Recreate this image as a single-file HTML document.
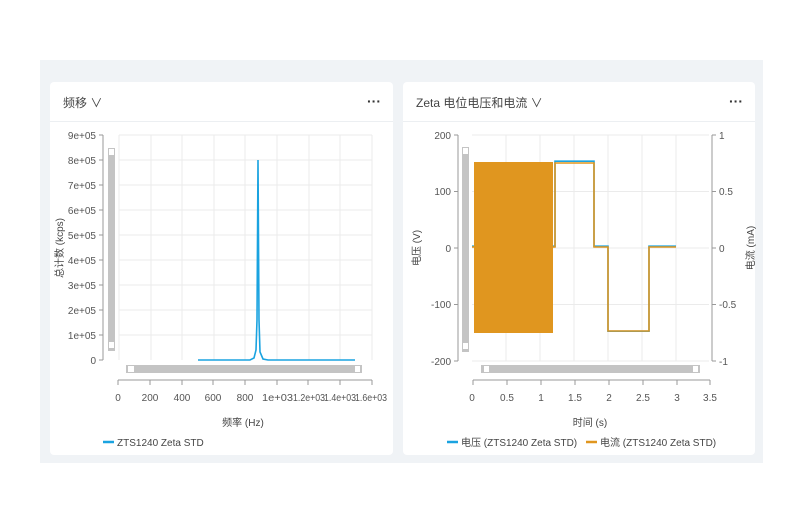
<!DOCTYPE html>
<html><head><meta charset="utf-8"><style>
body{margin:0;width:800px;height:523px;background:#fff;font-family:"Liberation Sans","Noto Sans CJK SC",sans-serif;position:relative;overflow:hidden}
.bg{position:absolute;left:40px;top:60px;width:723px;height:403px;background:#f0f3f6}
.topstrip{position:absolute;left:50px;top:52px;width:705px;height:7px;background:#fff}
.card{position:absolute;top:82px;height:373px;background:#fff;border-radius:4px}
.hd{position:absolute;left:0;right:0;top:0;height:39px;border-bottom:1px solid #eceff2}
.t{position:absolute;left:13px;top:12px;font-size:12px;color:#444}
.dots{position:absolute;right:12px;top:11px;font-size:14px;color:#333;font-weight:bold}
svg text{font-family:"Liberation Sans","Noto Sans CJK SC",sans-serif;fill:#555;font-size:10px}
</style></head><body>
<div class="topstrip"></div>
<div class="bg"></div>
<div class="card" style="left:50px;width:343px"><div class="hd"><div class="t">频移 ∨</div><div class="dots">···</div></div></div>
<div class="card" style="left:403px;width:352px"><div class="hd"><div class="t">Zeta 电位电压和电流 ∨</div><div class="dots">···</div></div></div>
<svg width="800" height="523" style="position:absolute;left:0;top:0">
<g stroke="#ebebeb" stroke-width="1">
<line x1="119" y1="135" x2="372" y2="135"/><line x1="119" y1="160" x2="372" y2="160"/><line x1="119" y1="185" x2="372" y2="185"/><line x1="119" y1="210" x2="372" y2="210"/><line x1="119" y1="235" x2="372" y2="235"/><line x1="119" y1="260" x2="372" y2="260"/><line x1="119" y1="285" x2="372" y2="285"/><line x1="119" y1="310" x2="372" y2="310"/><line x1="119" y1="335" x2="372" y2="335"/>
<line x1="119" y1="135" x2="119" y2="360"/><line x1="151" y1="135" x2="151" y2="360"/><line x1="182" y1="135" x2="182" y2="360"/><line x1="214" y1="135" x2="214" y2="360"/><line x1="245" y1="135" x2="245" y2="360"/><line x1="277" y1="135" x2="277" y2="360"/><line x1="309" y1="135" x2="309" y2="360"/><line x1="340" y1="135" x2="340" y2="360"/><line x1="372" y1="135" x2="372" y2="360"/>
</g>
<g stroke="#999"><line x1="103" y1="135" x2="103" y2="360"/>
<line x1="99" y1="135" x2="103" y2="135"/><line x1="99" y1="160" x2="103" y2="160"/><line x1="99" y1="185" x2="103" y2="185"/><line x1="99" y1="210" x2="103" y2="210"/><line x1="99" y1="235" x2="103" y2="235"/><line x1="99" y1="260" x2="103" y2="260"/><line x1="99" y1="285" x2="103" y2="285"/><line x1="99" y1="310" x2="103" y2="310"/><line x1="99" y1="335" x2="103" y2="335"/><line x1="99" y1="360" x2="103" y2="360"/>
<line x1="118" y1="380" x2="372" y2="380"/>
<line x1="118" y1="380" x2="118" y2="385"/><line x1="150" y1="380" x2="150" y2="385"/><line x1="182" y1="380" x2="182" y2="385"/><line x1="213" y1="380" x2="213" y2="385"/><line x1="245" y1="380" x2="245" y2="385"/><line x1="277" y1="380" x2="277" y2="385"/><line x1="308" y1="380" x2="308" y2="385"/><line x1="340" y1="380" x2="340" y2="385"/><line x1="372" y1="380" x2="372" y2="385"/>
</g>
<g text-anchor="end"><text x="96" y="139">9e+05</text><text x="96" y="164">8e+05</text><text x="96" y="189">7e+05</text><text x="96" y="214">6e+05</text><text x="96" y="239">5e+05</text><text x="96" y="264">4e+05</text><text x="96" y="289">3e+05</text><text x="96" y="314">2e+05</text><text x="96" y="339">1e+05</text><text x="96" y="364">0</text></g>
<g font-size="10"><text x="118" y="401" text-anchor="middle">0</text><text x="150" y="401" text-anchor="middle">200</text><text x="182" y="401" text-anchor="middle">400</text><text x="213" y="401" text-anchor="middle">600</text><text x="245" y="401" text-anchor="middle">800</text>
<text x="262" y="401" textLength="31" lengthAdjust="spacingAndGlyphs">1e+03</text><text x="293" y="401" textLength="32" lengthAdjust="spacingAndGlyphs">1.2e+03</text><text x="324" y="401" textLength="32" lengthAdjust="spacingAndGlyphs">1.4e+03</text><text x="355" y="401" textLength="32" lengthAdjust="spacingAndGlyphs">1.6e+03</text></g>
<text x="243" y="426" text-anchor="middle" font-size="11" style="fill:#444">频率 (Hz)</text>
<text transform="translate(63,248) rotate(-90)" text-anchor="middle" font-size="11" style="fill:#444">总计数 (kcps)</text>
<rect x="108" y="148" width="7" height="203" fill="#c4c4c4"/><rect x="109" y="149" width="5" height="6" fill="#fff"/><rect x="109" y="342" width="5" height="6" fill="#fff"/>
<rect x="126" y="365" width="236" height="8" fill="#c4c4c4"/><rect x="128" y="366" width="6" height="6" fill="#fff"/><rect x="355" y="366" width="5" height="6" fill="#fff"/>
<path d="M198 360 L250 360 L254 358 L256 350 L257 320 L258 160 L259 320 L260 352 L263 359 L268 360 L355 360" stroke="#1aa3e0" stroke-width="1.6" fill="none"/>
<line x1="103" y1="442" x2="114" y2="442" stroke="#1aa3e0" stroke-width="2.5"/>
<text x="117" y="446" font-size="10" style="fill:#444">ZTS1240 Zeta STD</text>

<g stroke="#ebebeb"><line x1="472" y1="135" x2="709" y2="135"/><line x1="472" y1="191.5" x2="709" y2="191.5"/><line x1="472" y1="248" x2="709" y2="248"/><line x1="472" y1="304.5" x2="709" y2="304.5"/><line x1="472" y1="361" x2="709" y2="361"/>
<line x1="506" y1="135" x2="506" y2="361"/><line x1="540" y1="135" x2="540" y2="361"/><line x1="574" y1="135" x2="574" y2="361"/><line x1="608" y1="135" x2="608" y2="361"/><line x1="642" y1="135" x2="642" y2="361"/><line x1="676" y1="135" x2="676" y2="361"/></g>
<g stroke="#999"><line x1="458" y1="135" x2="458" y2="361"/><line x1="454" y1="135" x2="458" y2="135"/><line x1="454" y1="191.5" x2="458" y2="191.5"/><line x1="454" y1="248" x2="458" y2="248"/><line x1="454" y1="304.5" x2="458" y2="304.5"/><line x1="454" y1="361" x2="458" y2="361"/>
<line x1="712" y1="135" x2="712" y2="361"/><line x1="712" y1="135" x2="716" y2="135"/><line x1="712" y1="191.5" x2="716" y2="191.5"/><line x1="712" y1="248" x2="716" y2="248"/><line x1="712" y1="304.5" x2="716" y2="304.5"/><line x1="712" y1="361" x2="716" y2="361"/>
<line x1="473" y1="380" x2="710" y2="380"/><line x1="473" y1="380" x2="473" y2="385"/><line x1="507" y1="380" x2="507" y2="385"/><line x1="541" y1="380" x2="541" y2="385"/><line x1="575" y1="380" x2="575" y2="385"/><line x1="609" y1="380" x2="609" y2="385"/><line x1="643" y1="380" x2="643" y2="385"/><line x1="677" y1="380" x2="677" y2="385"/><line x1="710" y1="380" x2="710" y2="385"/></g>
<g text-anchor="end"><text x="451" y="139">200</text><text x="451" y="195">100</text><text x="451" y="252">0</text><text x="451" y="308">-100</text><text x="451" y="365">-200</text></g>
<g><text x="719" y="139">1</text><text x="719" y="195">0.5</text><text x="719" y="252">0</text><text x="719" y="308">-0.5</text><text x="719" y="365">-1</text></g>
<g text-anchor="middle" font-size="10"><text x="472" y="401">0</text><text x="507" y="401">0.5</text><text x="541" y="401">1</text><text x="575" y="401">1.5</text><text x="609" y="401">2</text><text x="643" y="401">2.5</text><text x="677" y="401">3</text><text x="710" y="401">3.5</text></g>
<text x="590" y="426" text-anchor="middle" font-size="11" style="fill:#444">时间 (s)</text>
<text transform="translate(420,248) rotate(-90)" text-anchor="middle" font-size="11" style="fill:#444">电压 (V)</text>
<text transform="translate(754,248) rotate(-90)" text-anchor="middle" font-size="11" style="fill:#444">电流 (mA)</text>
<rect x="462" y="147" width="7" height="205" fill="#c4c4c4"/><rect x="463" y="148" width="5" height="6" fill="#fff"/><rect x="463" y="343" width="5" height="6" fill="#fff"/>
<rect x="481" y="365" width="219" height="8" fill="#c4c4c4"/><rect x="484" y="366" width="5" height="6" fill="#fff"/><rect x="693" y="366" width="5" height="6" fill="#fff"/>
<rect x="474" y="162" width="79" height="171" fill="#e0961f"/>
<path d="M472 247 L474 247 M553 247 L555 247 L555 162 L594 162 L594 247 L608 247 L608 332 L649 332 L649 247 L676 247" stroke="#1aa3e0" stroke-width="1.6" fill="none" transform="translate(0,-0.8)"/>
<path d="M472 247 L474 247 M553 247 L555 247 L555 163 L594 163 L594 247 L608 247 L608 331 L649 331 L649 247 L676 247" stroke="#e0961f" stroke-width="1.6" fill="none"/>
<line x1="447" y1="442" x2="458" y2="442" stroke="#1aa3e0" stroke-width="2.5"/>
<text x="461" y="446" font-size="10" style="fill:#444">电压 (ZTS1240 Zeta STD)</text>
<line x1="586" y1="442" x2="597" y2="442" stroke="#e0961f" stroke-width="2.5"/>
<text x="600" y="446" font-size="10" style="fill:#444">电流 (ZTS1240 Zeta STD)</text>
</svg>
</body></html>
